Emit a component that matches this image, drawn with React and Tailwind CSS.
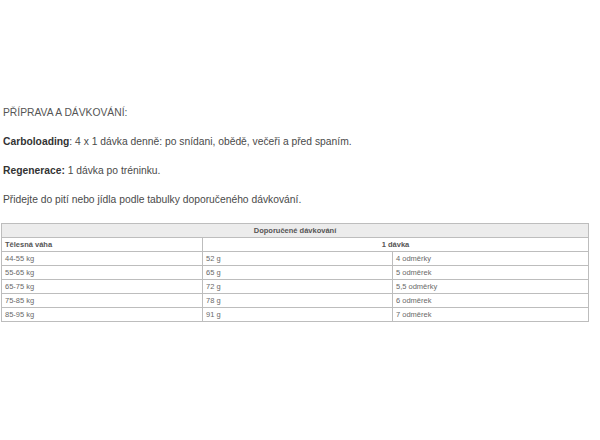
const rows = [
    ["44-55 kg", "52 g", "4 odměrky"],
    ["55-65 kg", "65 g", "5 odměrek"],
    ["65-75 kg", "72 g", "5,5 odměrky"],
    ["75-85 kg", "78 g", "6 odměrek"],
    ["85-95 kg", "91 g", "7 odměrek"],
];

const App = () => {
    return (
        <div className="w-[600px] h-[440px] bg-white pt-[106px] text-[#4a4a4a]" style={{ fontFamily: '"Liberation Sans", Arial, sans-serif' }}>
            <div className="px-[3px] text-[10.3px] leading-[14px]">
                <p className="mb-[15px] uppercase text-[#555]">Příprava a dávkování:</p>
                <p className="mb-[15px]"><b className="text-[#333]">Carboloading</b>: 4 x 1 dávka denně: po snídani, obědě, večeři a před spaním.</p>
                <p className="mb-[15px]"><b className="text-[#333]">Regenerace:</b> 1 dávka po tréninku.</p>
                <p className="mb-[16px]">Přidejte do pití nebo jídla podle tabulky doporučeného dávkování.</p>
            </div>
            <table className="ml-[1px] w-[587px] table-fixed border-collapse text-[7.5px] leading-[13px] text-[#6a6a6a]">
                <colgroup>
                    <col className="w-[201px]" />
                    <col className="w-[190px]" />
                    <col className="w-[196px]" />
                </colgroup>
                <tbody>
                    <tr className="h-[14px] bg-[#ececec]">
                        <td colSpan={3} className="border border-[#bdbdbd] text-center font-bold text-[#555]">Doporučené dávkování</td>
                    </tr>
                    <tr className="h-[14px]">
                        <td className="border border-[#bdbdbd] px-[3px] font-bold text-[#555]">Tělesná váha</td>
                        <td colSpan={2} className="border border-[#bdbdbd] text-center font-bold text-[#555]">1 dávka</td>
                    </tr>
                    {rows.map((r) => (
                        <tr key={r[0]} className="h-[14px]">
                            <td className="border border-[#bdbdbd] px-[3px]">{r[0]}</td>
                            <td className="border border-[#bdbdbd] px-[3px]">{r[1]}</td>
                            <td className="border border-[#bdbdbd] px-[3px]">{r[2]}</td>
                        </tr>
                    ))}
                </tbody>
            </table>
        </div>
    );
};

export default App;
